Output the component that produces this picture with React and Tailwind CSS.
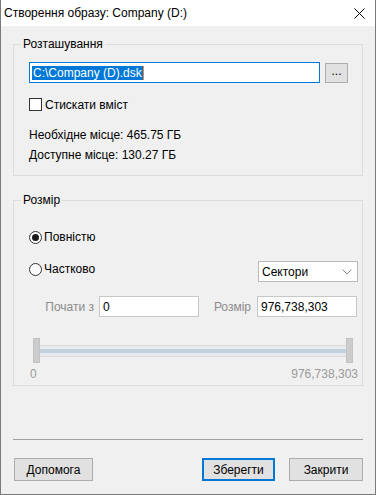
const Radio = ({ checked, label }) => (
  <div className="flex items-center h-[16px]">
    <div className="w-[13px] h-[13px] rounded-full border border-[#333333] bg-white flex items-center justify-center">
      {checked && <div className="w-[7px] h-[7px] rounded-full bg-[#1a1a1a]" />}
    </div>
    <span className="ml-[2px]">{label}</span>
  </div>
);

const Button = ({ label, width, primary }) => (
  <button
    className={
      "h-[23px] flex items-center justify-center bg-[#e1e1e1] " +
      width +
      (primary ? " border-2 border-[#0078d7]" : " border border-[#adadad]")
    }
  >
    {label}
  </button>
);

export default function App() {
  return (
    <div className="w-[376px] h-[495px] flex flex-col border-x border-b border-[#7a7a7a] bg-[#f0f0f0] text-[12px] leading-[16px] text-black font-['Liberation_Sans',sans-serif]">
      {/* title bar */}
      <div className="h-[26px] bg-white flex items-center justify-between pl-[3px] pr-[10px] shrink-0">
        <span className="text-[12px]">Створення образу: Company (D:)</span>
        <svg width="11" height="11" viewBox="0 0 11 11">
          <path d="M0.5 0.5 L10.5 10.5 M10.5 0.5 L0.5 10.5" stroke="#000" strokeWidth="1" />
        </svg>
      </div>

      <div className="flex-1 flex flex-col px-[12px]">
        {/* location */}
        <fieldset className="mt-[10px] border border-[#dcdcdc] pb-[12px]">
          <legend className="ml-[7px] px-[2px]">Розташування</legend>
          <div className="flex items-center mt-[10px] ml-[15px]">
            <div className="w-[291px] h-[21px] border border-[#0078d7] bg-white flex items-center pl-[2px]">
              <span className="bg-[#0078d7] text-white leading-[14px] px-[1px]">C:\Company (D).dsk</span>
              <span className="w-[1px] h-[14px] bg-[#f08a24]" />
            </div>
            <button className="ml-[5px] w-[23px] h-[20px] bg-[#e1e1e1] border border-[#adadad] flex items-center justify-center pb-[3px]">
              ...
            </button>
          </div>
          <div className="flex items-center mt-[15px] ml-[15px] h-[13px]">
            <div className="w-[13px] h-[13px] border border-[#333333] bg-white" />
            <span className="ml-[3px]">Стискати вміст</span>
          </div>
          <div className="mt-[16px] ml-[15px]">Необхідне місце: 465.75 ГБ</div>
          <div className="mt-[4px] ml-[15px]">Доступне місце: 130.27 ГБ</div>
        </fieldset>

        {/* size */}
        <fieldset className="mt-[16px] border border-[#dcdcdc] pb-[3px]">
          <legend className="ml-[7px] px-[2px]">Розмір</legend>
          <div className="mt-[21px] ml-[15px]">
            <Radio checked label="Повністю" />
          </div>
          <div className="mt-[16px] flex items-start justify-between pl-[15px] pr-[4px]">
            <Radio label="Частково" />
            <div className="w-[100px] h-[21px] border border-[#b9b9b9] bg-white flex items-center justify-between pl-[3px] pr-[5px]">
              <span>Сектори</span>
              <svg width="10" height="6" viewBox="0 0 10 6">
                <path d="M0.5 0.5 L5 5 L9.5 0.5" fill="none" stroke="#8a8a8a" strokeWidth="1" />
              </svg>
            </div>
          </div>
          <div className="mt-[14px] flex items-center">
            <span className="w-[80px] text-right text-[#8c8c8c]">Почати з</span>
            <div className="ml-[5px] w-[100px] h-[21px] border border-[#c8c8c8] bg-white flex items-center pl-[3px]">0</div>
            <span className="w-[58px] pr-[6px] text-right text-[#8c8c8c]">Розмір</span>
            <div className="w-[100px] h-[21px] border border-[#c8c8c8] bg-white flex items-center pl-[3px]">976,738,303</div>
          </div>
          <div className="mt-[21px] ml-[19px] flex items-center h-[25px]">
            <div className="w-[7px] h-[25px] bg-[#cccccc] border border-[#c3c3c3]" />
            <div className="w-[306px] h-[12px] border-y border-[#dadada] bg-[#e8ebee] flex items-center">
              <div className="w-full h-[4px] bg-[#c3d1de]" />
            </div>
            <div className="w-[7px] h-[25px] bg-[#cccccc] border border-[#c3c3c3]" />
          </div>
          <div className="mt-[3px] flex justify-between pl-[16px] pr-[4px] text-[#9a9a9a]">
            <span>0</span>
            <span>976,738,303</span>
          </div>
        </fieldset>

        <div className="mt-[53px] h-[1px] bg-[#a0a0a0]" />

        <div className="mt-[18px] flex items-center">
          <div className="ml-[1px]">
            <Button label="Допомога" width="w-[79px]" />
          </div>
          <div className="ml-auto flex gap-[14px]">
            <Button label="Зберегти" width="w-[73px]" primary />
            <Button label="Закрити" width="w-[74px]" />
          </div>
        </div>
      </div>
    </div>
  );
}
